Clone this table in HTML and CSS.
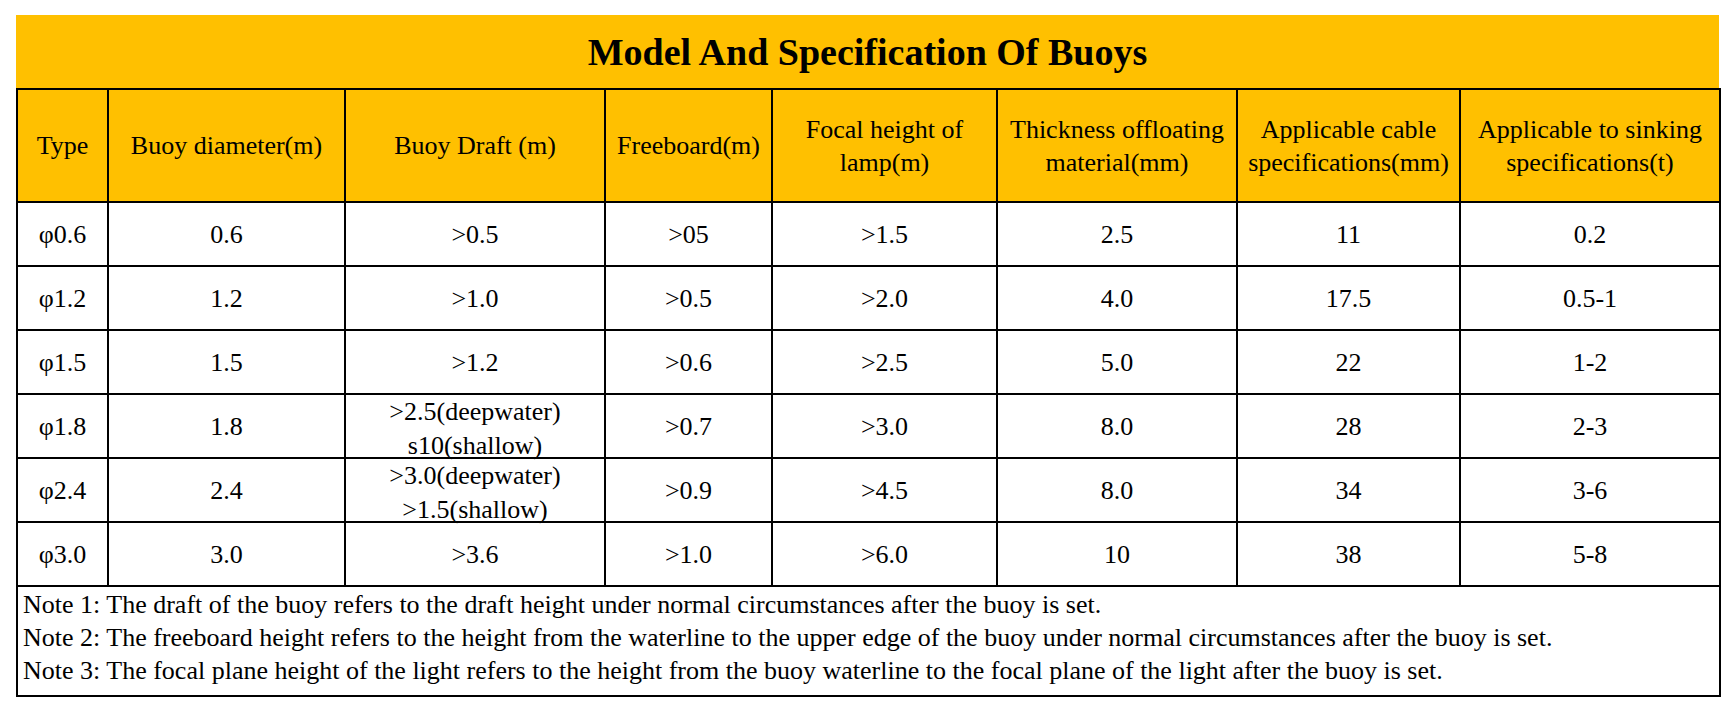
FILE: index.html
```html
<!DOCTYPE html>
<html lang="en">
<head>
<meta charset="utf-8">
<title>Model And Specification Of Buoys</title>
<link rel="stylesheet" href="styles.css">
</head>
<body>
<div class="sheet">
  <div class="title">Model And Specification Of Buoys</div>
  <table class="spec">
    <colgroup>
      <col class="c1"><col class="c2"><col class="c3"><col class="c4"><col class="c5"><col class="c6"><col class="c7"><col class="c8">
    </colgroup>
    <thead>
      <tr>
        <th>Type</th>
        <th>Buoy diameter(m)</th>
        <th>Buoy Draft (m)</th>
        <th>Freeboard(m)</th>
        <th>Focal height of<br>lamp(m)</th>
        <th>Thickness offloating<br>material(mm)</th>
        <th>Applicable cable<br>specifications(mm)</th>
        <th>Applicable to sinking<br>specifications(t)</th>
      </tr>
    </thead>
    <tbody>
      <tr><td>φ0.6</td><td>0.6</td><td>&gt;0.5</td><td>&gt;05</td><td>&gt;1.5</td><td>2.5</td><td>11</td><td>0.2</td></tr>
      <tr><td>φ1.2</td><td>1.2</td><td>&gt;1.0</td><td>&gt;0.5</td><td>&gt;2.0</td><td>4.0</td><td>17.5</td><td>0.5-1</td></tr>
      <tr><td>φ1.5</td><td>1.5</td><td>&gt;1.2</td><td>&gt;0.6</td><td>&gt;2.5</td><td>5.0</td><td>22</td><td>1-2</td></tr>
      <tr><td>φ1.8</td><td>1.8</td><td><div class="stack">&gt;2.5(deepwater)<br>s10(shallow)</div></td><td>&gt;0.7</td><td>&gt;3.0</td><td>8.0</td><td>28</td><td>2-3</td></tr>
      <tr><td>φ2.4</td><td>2.4</td><td><div class="stack">&gt;3.0(deepwater)<br>&gt;1.5(shallow)</div></td><td>&gt;0.9</td><td>&gt;4.5</td><td>8.0</td><td>34</td><td>3-6</td></tr>
      <tr><td>φ3.0</td><td>3.0</td><td>&gt;3.6</td><td>&gt;1.0</td><td>&gt;6.0</td><td>10</td><td>38</td><td>5-8</td></tr>
      <tr class="notes">
        <td colspan="8">
          <p>Note 1: The draft of the buoy refers to the draft height under normal circumstances after the buoy is set.</p>
          <p>Note 2: The freeboard height refers to the height from the waterline to the upper edge of the buoy under normal circumstances after the buoy is set.</p>
          <p>Note 3: The focal plane height of the light refers to the height from the buoy waterline to the focal plane of the light after the buoy is set.</p>
        </td>
      </tr>
    </tbody>
  </table>
</div>
</body>
</html>
```
FILE: styles.css
```css
html, body {
  margin: 0;
  padding: 0;
  background: #ffffff;
}

body {
  font-family: "Liberation Serif", "Times New Roman", serif;
  color: #000000;
}

.sheet {
  width: 1703px;
  margin: 15px 0 0 16px;
}

.title {
  background: #ffc000;
  height: 73px;
  display: flex;
  align-items: center;
  justify-content: center;
  font-weight: bold;
  font-size: 38px;
}

.spec {
  width: 1703px;
  border-collapse: collapse;
  table-layout: fixed;
  font-size: 26px;
}

.c1 { width: 91px; }
.c2 { width: 237px; }
.c3 { width: 260px; }
.c4 { width: 167px; }
.c5 { width: 225px; }
.c6 { width: 240px; }
.c7 { width: 223px; }
.c8 { width: 260px; }

.spec th,
.spec td {
  border: 2px solid #000000;
  text-align: center;
  vertical-align: middle;
  padding: 0;
  line-height: 33px;
  font-weight: normal;
  white-space: nowrap;
}

.spec th {
  background: #ffc000;
  height: 111px;
}

.spec td {
  height: 62px;
}

.stack {
  line-height: 34px;
  margin: -2px 0 -8px;
}

.notes td {
  text-align: left;
  height: auto;
  padding: 1px 5px 8px;
}

.notes p {
  margin: 0;
  line-height: 33px;
}
```
